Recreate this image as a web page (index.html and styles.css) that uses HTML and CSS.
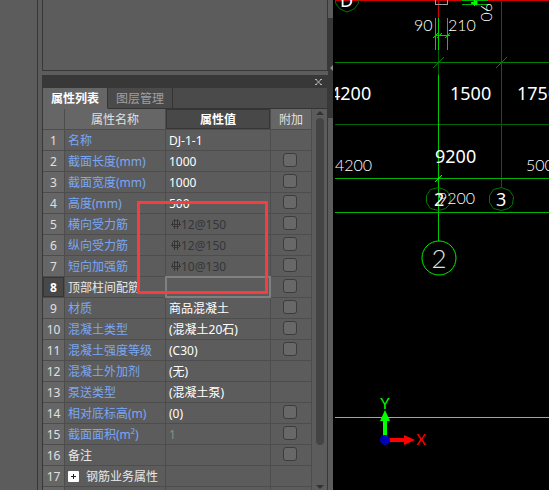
FILE: index.html
```html
<!DOCTYPE html>
<html lang="zh-CN">
<head>
    <meta charset="UTF-8">
    <meta name="viewport" content="width=device-width, initial-scale=1.0">
    <title>属性列表</title>
    <link rel="stylesheet" href="styles.css">
</head>
<body>
    <svg class="symbols" aria-hidden="true">
        <symbol id="rebar" viewBox="0 0 10 10">
            <path d="M3.5 0v10M6.5 0v10M0 5.5h10M2.5 1.5h5l1 1v4l-1 1h-5l-1-1v-4z" fill="none" stroke="currentColor"/>
        </symbol>
    </svg>

    <aside class="nav-panel"></aside>

    <main class="dock">
        <section class="component-list"></section>

        <section class="properties">
            <div class="dock-title">
                <button class="close" aria-label="关闭">
                    <svg width="7" height="6" viewBox="0 0 7 6"><path d="M0 .5h2M5 .5h2M0 5.5h2M5 5.5h2M1 .5l5 5M6 .5l-5 5" stroke="#b4b4b4"/></svg>
                </button>
            </div>
            <div class="tabs">
                <button class="tab active">属性列表</button>
                <button class="tab">图层管理</button>
            </div>

            <div class="grid-area">
                <table class="grid">
                    <colgroup>
                        <col class="col-num">
                        <col class="col-name">
                        <col class="col-value">
                        <col class="col-extra">
                    </colgroup>
                    <thead>
                        <tr><th></th><th>属性名称</th><th class="current">属性值</th><th>附加</th></tr>
                    </thead>
                    <tbody>
                        <tr><th>1</th><td class="name">名称</td><td>DJ-1-1</td><td></td></tr>
                        <tr><th>2</th><td class="name">截面长度(mm)</td><td>1000</td><td class="extra"><input type="checkbox" aria-label="附加 截面长度"></td></tr>
                        <tr><th>3</th><td class="name">截面宽度(mm)</td><td>1000</td><td class="extra"><input type="checkbox" aria-label="附加 截面宽度"></td></tr>
                        <tr><th>4</th><td class="name">高度(mm)</td><td>500</td><td class="extra"><input type="checkbox" aria-label="附加 高度"></td></tr>
                        <tr><th>5</th><td class="name">横向受力筋</td><td class="rebar"><svg><use href="#rebar"/></svg>12@150</td><td class="extra"><input type="checkbox" aria-label="附加 横向受力筋"></td></tr>
                        <tr><th>6</th><td class="name">纵向受力筋</td><td class="rebar"><svg><use href="#rebar"/></svg>12@150</td><td class="extra"><input type="checkbox" aria-label="附加 纵向受力筋"></td></tr>
                        <tr><th>7</th><td class="name">短向加强筋</td><td class="rebar"><svg><use href="#rebar"/></svg>10@130</td><td class="extra"><input type="checkbox" aria-label="附加 短向加强筋"></td></tr>
                        <tr><th class="current">8</th><td>顶部柱间配筋</td><td class="editing"><input type="text" aria-label="顶部柱间配筋"></td><td class="extra"><input type="checkbox" aria-label="附加 顶部柱间配筋"></td></tr>
                        <tr><th>9</th><td class="name">材质</td><td>商品混凝土</td><td class="extra"><input type="checkbox" aria-label="附加 材质"></td></tr>
                        <tr><th>10</th><td class="name">混凝土类型</td><td>(混凝土20石)</td><td class="extra"><input type="checkbox" aria-label="附加 混凝土类型"></td></tr>
                        <tr><th>11</th><td class="name">混凝土强度等级</td><td>(C30)</td><td class="extra"><input type="checkbox" aria-label="附加 混凝土强度等级"></td></tr>
                        <tr><th>12</th><td class="name">混凝土外加剂</td><td>(无)</td><td></td></tr>
                        <tr><th>13</th><td class="name">泵送类型</td><td>(混凝土泵)</td><td></td></tr>
                        <tr><th>14</th><td class="name">相对底标高(m)</td><td>(0)</td><td class="extra"><input type="checkbox" aria-label="附加 相对底标高"></td></tr>
                        <tr><th>15</th><td class="name">截面面积(m²)</td><td class="readonly">1</td><td class="extra"><input type="checkbox" aria-label="附加 截面面积"></td></tr>
                        <tr><th>16</th><td>备注</td><td></td><td class="extra"><input type="checkbox" aria-label="附加 备注"></td></tr>
                        <tr><th>17</th><td class="group"><button class="expand" aria-label="展开"><svg width="5" height="5"><path d="M0 2.5h5M2.5 0v5" stroke="#222"/></svg></button>钢筋业务属性</td><td></td><td></td></tr>
                        <tr><th></th><td></td><td></td><td></td></tr>
                    </tbody>
                </table>
                <div class="scrollbar">
                    <svg width="8" height="4"><path d="M0 4l4-4 4 4z" fill="#333"/></svg>
                    <div class="thumb"></div>
                    <svg width="8" height="4"><path d="M0 0l4 4 4-4z" fill="#333"/></svg>
                </div>
            </div>
            <div class="highlight"></div>
        </section>
    </main>

    <div class="splitter">
        <div class="splitter-handle">
            <svg width="3" height="6"><path d="M3 0v6L0 3z" fill="#8c8c8c"/></svg>
        </div>
    </div>

    <section class="drawing">
        <svg viewBox="0 0 214 490" preserveAspectRatio="xMinYMin slice">
            <!-- axis lines -->
            <g class="axis">
                <path d="M166.500 0V187" stroke="#006400"/>
                <path d="M103.500 50V75" stroke="#006400"/>
                <path d="M0 62.500H214" stroke="#008200"/>
                <path d="M0 124.500H214" stroke="#006400"/>
                <path d="M0 178.500H214M0 212.500H214" stroke="#00b400"/>
                <path d="M103.500 75V241" stroke="#00c800"/>
                <path d="M98 68l11-11M161 68l11-11" stroke="#008200"/>
                <path d="M100 182l7-7" stroke="#00ff00"/>
            </g>

            <!-- column and its offsets -->
            <path class="axis" d="M0 .5H214M103.500 0V18" stroke="#d00000"/>
            <path class="axis" d="M100.500 0V4.500H112.500V0" fill="none" stroke="#a0a0a0"/>
            <path class="axis" d="M127 .5H153M127 4.500H153" stroke="#00b400"/>
            <path d="M139.500 0V6M136 3l6-2v4z" stroke="#00ff00" fill="#00ff00"/>
            <path class="axis" d="M100.500 18V50M103.500 18V50M112.500 18V50M101 35.500H115" stroke="#00d200"/>
            <path d="M98 38l5-5M102 38l5-5M110 38l5-5" stroke="#00d200"/>

            <!-- axis bubbles -->
            <g fill="none" stroke="#007800">
                <path d="M0 0l1 4 4 5 7 3 7-3 4-5 1-4"/>
                <path d="M103.500 187.500l8 3 4 6-1 8-4 4-7 2-8-2-4-6v-7l4-6z"/>
                <path d="M166.500 187.500l8 3 4 6-1 8-4 4-7 2-8-2-4-6v-7l4-6z"/>
            </g>
            <circle cx="104" cy="258" r="17" fill="none" stroke="#00f000"/>

            <g class="label">
                <text x="5" y="7">D</text>
                <text x="-5" y="100">4200</text>
                <text x="115" y="100">1500</text>
                <text x="182" y="100">1750</text>
                <text x="100" y="163">9200</text>
                <text x="99" y="206">2</text>
                <text x="161" y="206">3</text>
            </g>
            <g class="dim">
                <text x="79" y="31">90</text>
                <text x="113" y="31">210</text>
                <text transform="translate(146 3) rotate(90)">90</text>
                <text x="0" y="171">4200</text>
                <text x="191" y="171">500</text>
                <text x="103" y="204">9200</text>
            </g>
            <text class="bubble-text" x="104" y="268">2</text>

            <!-- origin marker -->
            <path class="axis" d="M0 417.500H214" stroke="#20d8e8"/>
            <path d="M48 440V421h-3l5-11 5 11h-3v19z" fill="#00ff00"/>
            <path d="M50 438h19v-3l11 5-11 5v-3H50z" fill="#ff0000"/>
            <circle cx="50" cy="440" r="5" fill="#0000b8"/>
            <text class="ucs" x="50" y="409" fill="#00ff00">Y</text>
            <text class="ucs" x="86" y="445" fill="#ff0000">X</text>
        </svg>
    </section>
</body>
</html>
```

FILE: styles.css
```css
* {
    margin: 0;
    padding: 0;
    box-sizing: border-box;
}

body {
    display: flex;
    height: 100vh;
    overflow: hidden;
    background: #5c5c5c;
    color: #f0f0f0;
    font-family: "Noto Sans", "Noto Sans CJK SC", sans-serif;
    font-size: 12px;
}

button {
    border: none;
    background: none;
    color: inherit;
    font: inherit;
}

.symbols {
    position: absolute;
    width: 0;
    height: 0;
}

.nav-panel {
    flex: 0 0 38px;
    border-right: 1px solid #383838;
}

.dock {
    flex: 0 0 290px;
    display: flex;
    flex-direction: column;
    gap: 4px;
    padding-left: 4px;
}

.component-list {
    flex: 0 0 71px;
    border: 1px solid #383838;
    border-top: none;
}

.properties {
    position: relative;
    flex: 1;
    min-height: 0;
    display: flex;
    flex-direction: column;
    border: 1px solid #383838;
    border-bottom: none;
}

.dock-title {
    flex: 0 0 11px;
    display: flex;
    justify-content: flex-end;
    align-items: center;
    padding-right: 5px;
    background: #383838;
}

.close {
    display: flex;
}

.tabs {
    flex: 0 0 22px;
    display: flex;
    background: #4a4a4a;
    border-top: 1px solid #383838;
    border-bottom: 1px solid #343434;
}

.tab {
    width: 65px;
    margin-bottom: -1px;
    border-right: 1px solid #343434;
    border-bottom: 1px solid #343434;
    color: #a0a0a0;
    line-height: 19px;
    white-space: nowrap;
}

.tab.active {
    background: #666;
    border-bottom-color: #666;
    color: #fff;
    font-weight: bold;
}

.grid-area {
    flex: 1;
    min-height: 0;
    display: flex;
    overflow: hidden;
}

.grid {
    flex: 1;
    align-self: flex-start;
    table-layout: fixed;
    border-collapse: separate;
    border-spacing: 0;
}

.col-num {
    width: 22px;
}

.col-name {
    width: 101px;
}

.col-value {
    width: 105px;
}

.grid th,
.grid td {
    height: 21px;
    padding-top: 2px;
    border-right: 1px solid #4d4d4d;
    border-bottom: 1px solid #4d4d4d;
    line-height: 18px;
    white-space: nowrap;
}

.grid th {
    background: #666;
    color: #e0e0e0;
    font-weight: normal;
    text-align: center;
}

.grid td {
    padding-left: 3px;
    color: #fff;
}

.grid td:nth-child(2) {
    color: #e8e8e8;
}

.grid td.name {
    color: #7aa7f5;
}

.grid th.current {
    background: #484848;
    box-shadow: inset 0 0 0 1px #363636;
    color: #fff;
    font-weight: bold;
}

.grid td.rebar {
    color: #363636;
}

.rebar svg {
    width: 10px;
    height: 10px;
    margin: 0 0 4px 2px;
    vertical-align: middle;
}

.grid td.readonly {
    color: #8c8c8c;
}

.grid td.extra {
    padding: 0 2px 2px 0;
    text-align: center;
}

.extra input {
    appearance: none;
    display: block;
    width: 14px;
    height: 14px;
    margin: 0 auto;
    border: 1px solid #3c3c3c;
    border-radius: 3px;
    background: #686868;
}

.grid td.editing {
    padding: 0;
}

.editing input {
    display: block;
    width: 100%;
    height: 20px;
    padding: 0 3px;
    border: none;
    outline: 2px solid #808080;
    outline-offset: -1px;
    background: transparent;
    color: #fff;
    font: inherit;
}

.expand {
    display: inline-flex;
    align-items: center;
    justify-content: center;
    width: 11px;
    height: 11px;
    margin: 0 7px 2px 0;
    border-radius: 1px;
    background: #fff;
    vertical-align: middle;
}

.scrollbar {
    flex: 0 0 15px;
    display: flex;
    flex-direction: column;
    align-items: center;
    gap: 3px;
    padding: 2px 0 1px;
}

.thumb {
    flex: 0 1 327px;
    width: 8px;
    margin-bottom: auto;
    border-radius: 4px;
    background: #444;
}

/* marked range over the reinforcement rows */
.highlight {
    position: absolute;
    left: 94px;
    top: 125px;
    width: 131px;
    height: 93px;
    border: 3px solid #fa3c3c;
    pointer-events: none;
}

.splitter {
    flex: 0 0 5px;
    padding-top: 18px;
}

.splitter-handle {
    display: flex;
    align-items: center;
    justify-content: flex-end;
    height: 100px;
    background: #383838;
}

.drawing {
    flex: 1;
    min-width: 0;
    padding-left: 2px;
    background: #000;
}

.drawing svg {
    display: block;
    width: 100%;
    height: 100%;
}

.axis {
    shape-rendering: crispEdges;
}

.label {
    fill: #fff;
    font-size: 18px;
}

.dim {
    fill: #fff;
    font-family: Lato, sans-serif;
    font-size: 16px;
    font-weight: 300;
}

.bubble-text {
    fill: #e0e0e0;
    font-family: Lato, sans-serif;
    font-size: 26px;
    font-weight: 300;
    text-anchor: middle;
}

.ucs {
    font-family: Lato, sans-serif;
    font-size: 15px;
    text-anchor: middle;
}
```
